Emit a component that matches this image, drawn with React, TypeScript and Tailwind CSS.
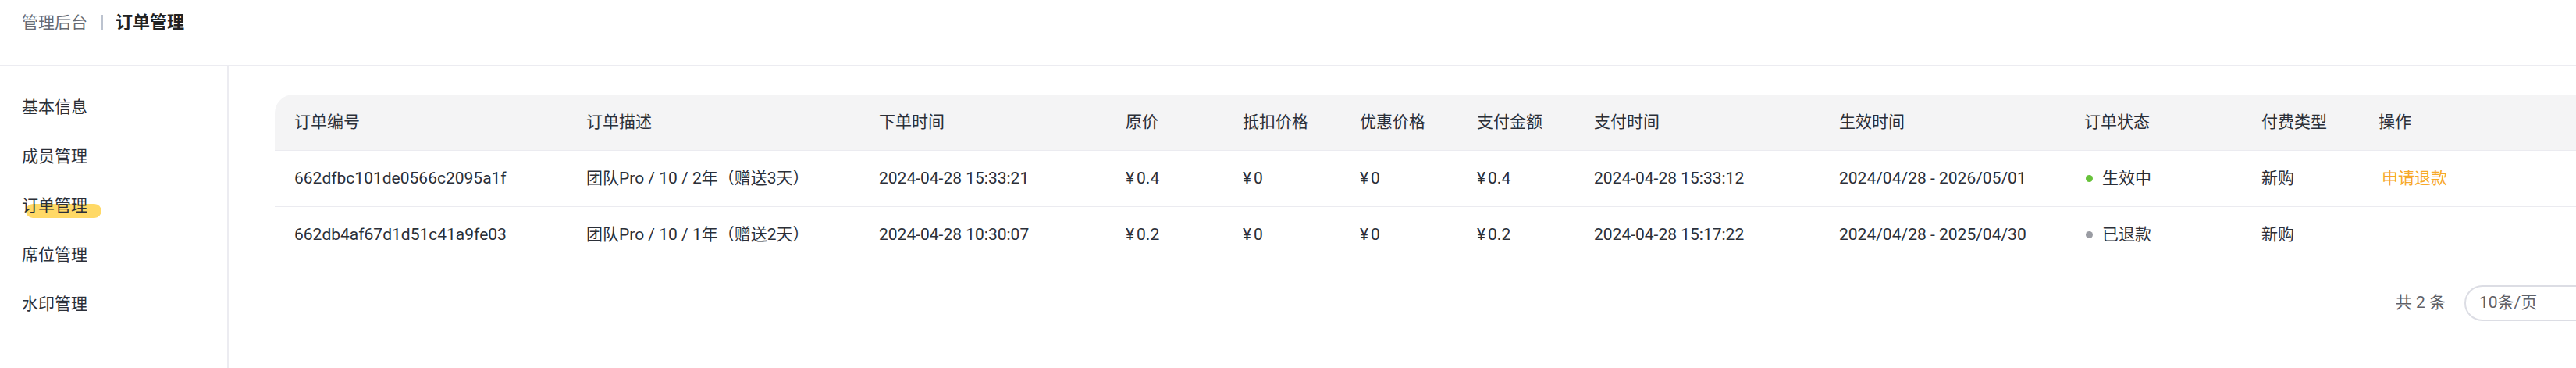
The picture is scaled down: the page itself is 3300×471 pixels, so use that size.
import React from 'react';

const font = "font-['Roboto','Noto_Sans_CJK_SC',sans-serif]";

const menu = ['基本信息', '成员管理', '订单管理', '席位管理', '水印管理'];

const cols = ['订单编号', '订单描述', '下单时间', '原价', '抵扣价格', '优惠价格', '支付金额', '支付时间', '生效时间', '订单状态', '付费类型', '操作'];

const grid = 'grid grid-cols-[374px_375px_316px_150px_150px_150px_150px_314px_314px_227px_150px_331px]';

const orders = [
 {
  id: '662dfbc101de0566c2095a1f',
  desc: '团队Pro / 10 / 2年（赠送3天）',
  created: '2024-04-28 15:33:21',
  price: '¥0.4',
  deduct: '¥0',
  discount: '¥0',
  paid: '¥0.4',
  paidAt: '2024-04-28 15:33:12',
  period: '2024/04/28 - 2026/05/01',
  status: '生效中',
  active: true,
  type: '新购',
 },
 {
  id: '662db4af67d1d51c41a9fe03',
  desc: '团队Pro / 10 / 1年（赠送2天）',
  created: '2024-04-28 10:30:07',
  price: '¥0.2',
  deduct: '¥0',
  discount: '¥0',
  paid: '¥0.2',
  paidAt: '2024-04-28 15:17:22',
  period: '2024/04/28 - 2025/04/30',
  status: '已退款',
  active: false,
  type: '新购',
 },
];

const Price = ({value}: {value: string}) => (
 <span>
  <span className="mr-[3px]">¥</span>
  {value.slice(1)}
 </span>
);

const App = () => {
 return (
  <div className={`${font} w-[3300px] h-[471px] overflow-hidden bg-white text-[21px] text-[#2b2f38]`}>
   {/* top bar */}
   <div className="h-[85px] border-b-2 border-[#ececf1] pl-[28px] pt-[14px]">
    <div className="flex items-center leading-[30px]">
     <span className="text-[#666a73]">管理后台</span>
     <span className="ml-[18px] mr-[16px] w-[2px] h-[20px] bg-[#bcc3cf]" />
     <span className="font-bold text-[22px] text-[#222]">订单管理</span>
    </div>
   </div>

   <div className="flex h-[386px]">
    {/* side menu */}
    <div className="w-[293px] shrink-0 border-r-2 border-[#ececf1] pt-[20px]">
     {menu.map((m) => (
      <div key={m} className="h-[63px] flex items-center pl-[28px]">
       <span className="relative inline-block leading-[30px]">
        {m === '订单管理' && (
         <span className="absolute left-[5px] top-[13px] w-[97px] h-[18px] rounded-full bg-[#ffd966]" />
        )}
        <span className="relative">{m}</span>
       </span>
      </div>
     ))}
    </div>

    {/* main */}
    <div className="pl-[59px] pt-[36px] shrink-0">
     <div className="w-[3001px]">
      <div className={`${grid} h-[72px] items-center bg-[#f4f4f5] rounded-tl-[24px] border-b border-[#ebebf0]`}>
       {cols.map((c) => (
        <div key={c} className="pl-[25px]">{c}</div>
       ))}
      </div>
      {orders.map((o) => (
       <div key={o.id} className={`${grid} h-[72px] items-center border-b border-[#ebebf0]`}>
        <div className="pl-[25px]">{o.id}</div>
        <div className="pl-[25px]">{o.desc}</div>
        <div className="pl-[25px]">{o.created}</div>
        <div className="pl-[25px]"><Price value={o.price} /></div>
        <div className="pl-[25px]"><Price value={o.deduct} /></div>
        <div className="pl-[25px]"><Price value={o.discount} /></div>
        <div className="pl-[25px]"><Price value={o.paid} /></div>
        <div className="pl-[25px]">{o.paidAt}</div>
        <div className="pl-[25px]">{o.period}</div>
        <div className="pl-[27px] flex items-center gap-[12px]">
         <span className={`w-[9px] h-[9px] rounded-full ${o.active ? 'bg-[#67c23a]' : 'bg-[#9a9ca3]'}`} />
         <span>{o.status}</span>
        </div>
        <div className="pl-[25px]">{o.type}</div>
        <div className="pl-[29px]">
         {o.active && <span className="text-[#f7a928] cursor-pointer">申请退款</span>}
        </div>
       </div>
      ))}

      {/* pagination */}
      <div className="flex justify-end items-center mt-[28px] gap-[24px]">
       <span className="text-[#5f6168]">共 2 条</span>
       <div className="w-[196px] h-[46px] rounded-full border-2 border-[#dcdde4] flex items-center pl-[17px] text-[#5f6168]">
        10条/页
       </div>
      </div>
     </div>
    </div>
   </div>
  </div>
 );
};

export default App;
